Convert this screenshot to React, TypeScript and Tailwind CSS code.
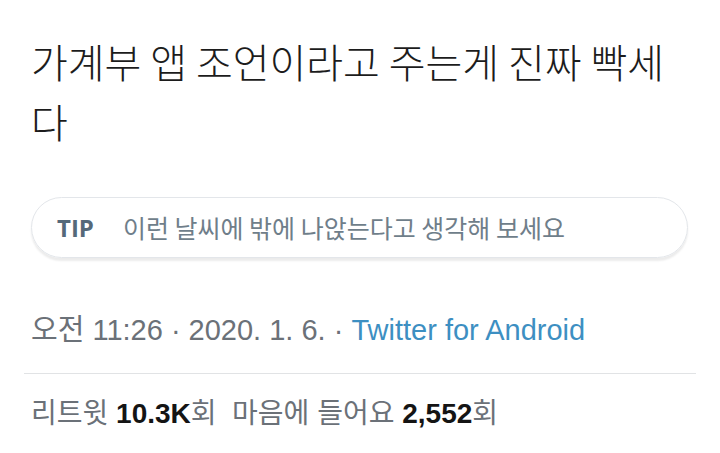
export default function App() {
  const font = { fontFamily: '"Liberation Sans", "Noto Sans CJK KR", sans-serif' };
  return (
    <div className="w-[720px] h-[453px] bg-white overflow-hidden" style={font}>
      <div className="pl-[31px] pr-[24px] pt-[31px]">
        {/* tweet body */}
        <p className="text-[40px] leading-[60px] text-[#1c1c1c] font-light font-['Noto_Sans_CJK_KR',sans-serif]">
          가계부 앱 조언이라고 주는게 진짜 빡세다
        </p>

        {/* tip pill */}
        <div className="mt-[46px] w-[657px] h-[61px] rounded-full border border-[#e3e6ea] shadow-[0_3px_2px_rgba(0,0,0,0.08)] flex items-center pl-[25px]">
          <span className="text-[24px] font-bold text-[#55697a] font-['Open_Sans',sans-serif]">TIP</span>
          <span className="ml-[29px] text-[25px] text-[#6f7e8a] font-['Noto_Sans_CJK_KR',sans-serif]">
            이런 날씨에 밖에 나앉는다고 생각해 보세요
          </span>
        </div>

        {/* timestamp */}
        <div className="mt-[54px] text-[29px] leading-[36px] text-[#6b7178]">
          오전 11:26 · 2020. 1. 6. · <span className="text-[#3d8fc2]">Twitter for Android</span>
        </div>
      </div>

      <div className="mt-[25px] mx-[24px] h-px bg-[#e1e3e5]" />

      <div className="pl-[31px] pt-[22px] text-[28px] leading-[36px] text-[#6b7178]">
        리트윗 <span className="font-bold text-[#141414]">10.3K</span>회&nbsp;&nbsp;마음에 들어요{" "}
        <span className="font-bold text-[#141414]">2,552</span>회
      </div>
    </div>
  );
}
